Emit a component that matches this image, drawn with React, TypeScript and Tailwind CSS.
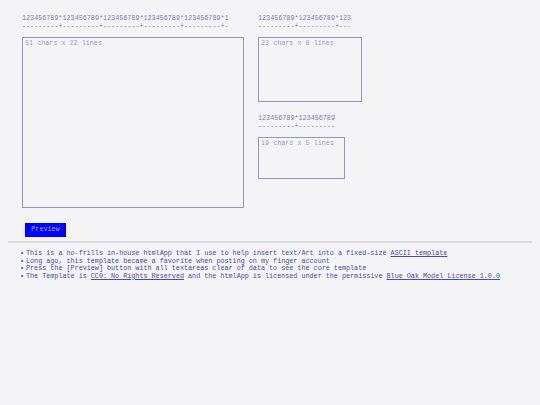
import React from 'react';

const mono = { fontFamily: '"Liberation Mono", "DejaVu Sans Mono", monospace' };

function Ruler({ digits, dashes }: { digits: string; dashes: string }) {
  return (
    <div className="whitespace-pre text-[6.75px] leading-[7.5px] text-[#7a7acc]">
      <div>{digits}</div>
      <div>{dashes}</div>
    </div>
  );
}

function Box({ w, h, label }: { w: string; h: string; label: string }) {
  return (
    <textarea
      placeholder={label}
      className={`${w} ${h} block resize-none border border-[#9494c8] bg-transparent px-[2px] py-[2px] text-[6.75px] leading-[7.5px] text-[#5555aa] placeholder:text-[#9a9ad8] outline-none`}
      style={mono}
    />
  );
}

function Item({ children }: { children: React.ReactNode }) {
  return (
    <li className="flex">
      <span className="w-[6px] shrink-0">•</span>
      <span>{children}</span>
    </li>
  );
}

export default function App() {
  return (
    <div className="min-h-[405px] w-[540px] bg-[#f4f4f6] pt-[15px]" style={mono}>
      <div className="flex gap-[14px] pl-[22px]">
        <div className="flex flex-col">
          <Ruler
            digits="123456789*123456789*123456789*123456789*123456789*1"
            dashes="---------+---------+---------+---------+---------+-"
          />
          <div className="mt-[7px]">
            <Box w="w-[222px]" h="h-[171px]" label="51 chars x 22 lines" />
          </div>
        </div>
        <div className="flex flex-col">
          <Ruler digits="123456789*123456789*123" dashes="---------+---------+---" />
          <div className="mt-[7px]">
            <Box w="w-[104px]" h="h-[65px]" label="23 chars x 8 lines" />
          </div>
          <div className="mt-[13px]">
            <Ruler digits="123456789*123456789" dashes="---------+---------" />
          </div>
          <div className="mt-[7px]">
            <Box w="w-[87px]" h="h-[42px]" label="19 chars x 5 lines" />
          </div>
        </div>
      </div>

      <button
        className="ml-[25px] mt-[15px] block h-[14px] w-[41px] bg-[#0000ff] text-[6.75px] leading-[7.5px] text-[#a8acff]"
        style={mono}
      >
        Preview
      </button>

      <hr className="mx-[8px] mt-[4px] border-t-2 border-[#dcdce0]" />

      <ul className="mt-[7px] pl-[20px] text-[6.75px] leading-[7.5px] text-[#4a4ab0]">
        <Item>
          This is a no-frills in-house htmlApp that I use to help insert text/Art into a fixed-size{' '}
          <a href="#" className="underline">ASCII template</a>
        </Item>
        <Item>Long ago, this template became a favorite when posting on my finger account</Item>
        <Item>Press the [Preview] button with all textareas clear of data to see the core template</Item>
        <Item>
          The Template is <a href="#" className="underline">CC0: No Rights Reserved</a> and the htmlApp is licensed under the permissive{' '}
          <a href="#" className="underline">Blue Oak Model License 1.0.0</a>
        </Item>
      </ul>
    </div>
  );
}
